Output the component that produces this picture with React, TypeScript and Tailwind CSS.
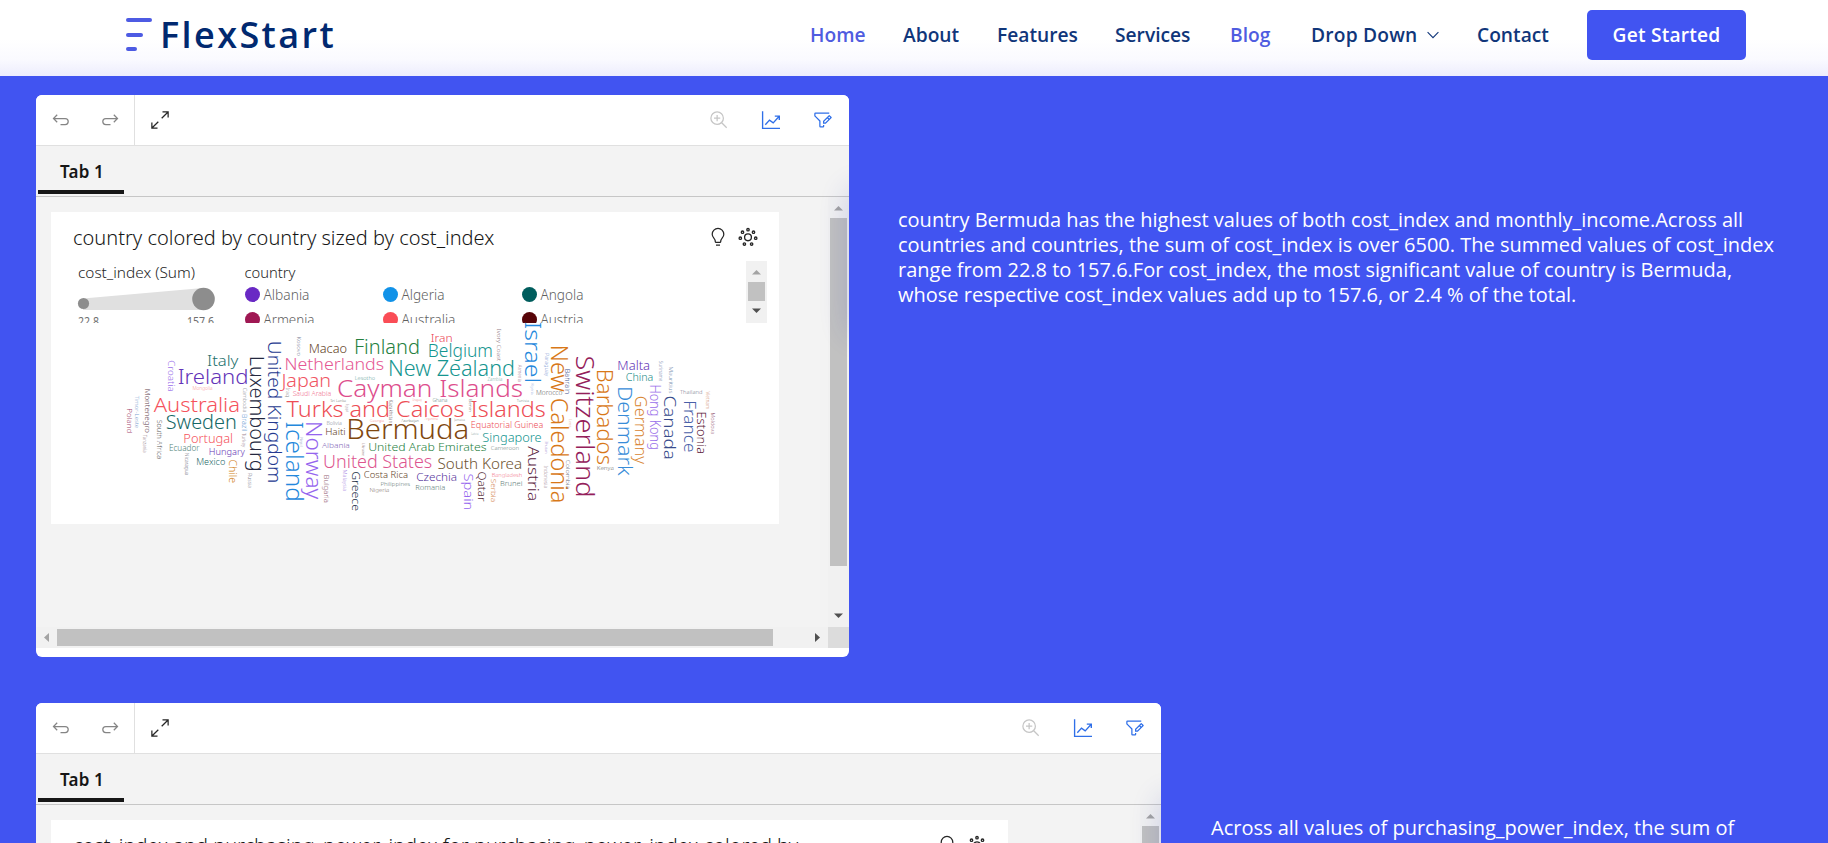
import React from "react";

const UI = "font-['Noto_Sans',sans-serif]";

type Word = [string, number, number, number, number, string];

// text, x, baseline, length, size, colour
const across: Word[] = [
  ["Italy", 207.7, 366, 30.3, 14, "#22706c"],
  ["Ireland", 178.7, 384, 69.3, 20.5, "#6333b8"],
  ["Mongolia", 192.7, 390, 19.7, 5, "#fa9a9a"],
  ["Australia", 154.7, 411.7, 84.7, 21, "#f5525c"],
  ["Sweden", 166.7, 428.5, 69.5, 20, "#156866"],
  ["Portugal", 184, 442.7, 48.7, 13, "#f5525c"],
  ["Ecuador", 169.3, 451, 30, 8.5, "#4f7f78"],
  ["Hungary", 209.3, 454.7, 35.3, 10, "#6333b5"],
  ["Mexico", 196.7, 465, 28.3, 9.5, "#206866"],
  ["Macao", 309.3, 353, 37.3, 13.5, "#64431f"],
  ["Finland", 355, 354, 64.3, 20.5, "#258040"],
  ["Iran", 431.3, 342, 21, 11, "#ea4050"],
  ["Belgium", 428.7, 357.3, 63.7, 18, "#159590"],
  ["Netherlands", 285.3, 370, 98.3, 17.5, "#e55893"],
  ["New Zealand", 389, 375.7, 125.3, 21.5, "#159590"],
  ["Japan", 282.3, 387, 48.3, 18.5, "#f05562"],
  ["Lesotho", 355, 380, 20, 5, "#6fa9a4"],
  ["Saudi Arabia", 293, 395.7, 38, 7, "#f07090"],
  ["Cayman Islands", 338.3, 396.7, 184, 25, "#dd4d8d"],
  ["Turks and Caicos Islands", 287.7, 416.7, 257.3, 23, "#ed4d55"],
  ["Bermuda", 347.7, 439.3, 120.7, 28.5, "#804810"],
  ["Haiti", 325.7, 435.3, 19.7, 10, "#64431f"],
  ["Bolivia", 326.7, 425, 15, 4.5, "#8a9098"],
  ["Albania", 322.3, 447.7, 27.3, 8, "#8569b8"],
  ["United Arab Emirates", 368.7, 451.3, 117.6, 10.8, "#258040"],
  ["United States", 324, 468, 107.7, 18, "#dd558f"],
  ["South Korea", 438.3, 469, 83.4, 15, "#6d5230"],
  ["Costa Rica", 364.3, 477.7, 43.4, 8.7, "#64431f"],
  ["Czechia", 416.7, 481, 40, 11, "#53309a"],
  ["Philippines", 380.7, 485.7, 29.3, 5.5, "#6d7f7d"],
  ["Nigeria", 369.7, 491.7, 19.3, 5.5, "#7f7368"],
  ["Romania", 415.7, 490, 29.3, 7.5, "#64807a"],
  ["Sri Lanka", 330.7, 401.7, 15.3, 3.5, "#777777"],
  ["Ghana", 432.7, 401.7, 14.6, 5, "#6f908a"],
  ["Georgia", 370, 421.7, 14, 3.5, "#f28a8a"],
  ["Azerbaijan", 401.3, 421.7, 17.7, 3.5, "#5a6f6a"],
  ["Argentina", 425, 419.7, 12.7, 3, "#f28a8a"],
  ["Uruguay", 412.7, 401, 9, 3, "#f28a8a"],
  ["Jamaica", 454.3, 421, 10.7, 3, "#888888"],
  ["Zambia", 487.7, 380.7, 14.6, 4.5, "#7fb0aa"],
  ["Morocco", 536.3, 394.7, 26, 7, "#6d6d6d"],
  ["Tunisia", 517, 401.7, 12, 4, "#6f908a"],
  ["Equatorial Guinea", 471.3, 427.7, 71.7, 9, "#ed4d55"],
  ["Singapore", 483, 442, 58.3, 13, "#159590"],
  ["Latvia", 471.3, 435, 7, 3, "#7fa09a"],
  ["Cameroon", 491, 449.7, 28, 6, "#7a8a88"],
  ["Bangladesh", 492, 477, 30, 5.5, "#f27a90"],
  ["Brunei", 500.3, 485.7, 22, 8, "#64807a"],
  ["Malta", 618, 370, 31.7, 13, "#6333b5"],
  ["China", 626.3, 381, 26.7, 10.5, "#158a85"],
  ["Kenya", 597, 470.3, 16.7, 5.5, "#6d6d6d"],
  ["Thailand", 680.3, 394, 22, 6, "#7f7f95"],
];

// text, baseline x, top y, length, size, colour
const down: Word[] = [
  ["Croatia", 168, 360.7, 30.7, 9.5, "#9a70ea"],
  ["Montenegro", 144.7, 389, 43.7, 7.5, "#64434f"],
  ["Timor-Leste", 135, 396, 32, 5.5, "#7aa0d0"],
  ["Poland", 126.5, 408.7, 24.3, 7.5, "#a0406a"],
  ["Tanzania", 142.7, 435, 17.7, 4.5, "#907a85"],
  ["South Africa", 157, 420, 39, 6.5, "#555555"],
  ["Nicaragua", 185, 453.3, 21.7, 5, "#6a6a7a"],
  ["Chile", 229.3, 460, 22.7, 10.5, "#d08020"],
  ["Russia", 248.3, 473.3, 14.7, 5, "#7a7a8a"],
  ["Cambodia", 243, 388, 24.3, 5, "#7f8890"],
  ["Brazil", 242, 414.3, 17, 7, "#5a94d0"],
  ["Turkey", 242.3, 433.3, 13.7, 5, "#988090"],
  ["Luxembourg", 250.3, 356.7, 114.3, 21, "#24283f"],
  ["United Kingdom", 268, 341.7, 141, 19.5, "#253a90"],
  ["Iceland", 285.7, 422.7, 78.3, 24, "#2488dc"],
  ["Norway", 306, 422, 76.5, 22.5, "#9565ee"],
  ["Nepal", 300, 437.7, 9, 3.5, "#8a9ac0"],
  ["Iraq", 285.5, 388, 9, 5, "#888888"],
  ["Kosovo", 297.3, 336.7, 19.3, 5, "#7a8098"],
  ["Egypt", 346, 404, 8, 3.5, "#a08a95"],
  ["Kazakhstan", 389.3, 400, 23, 5, "#6a5a60"],
  ["Ukraine", 362.3, 443.3, 12.7, 4, "#8a6a6a"],
  ["Malaysia", 343.3, 470, 21, 5, "#a07ce0"],
  ["Bulgaria", 323.7, 475, 27.7, 6.5, "#905a70"],
  ["Greece", 352, 471.7, 39, 11.5, "#24324a"],
  ["Spain", 464.3, 474, 36, 12, "#9565ee"],
  ["Qatar", 478, 472, 29.3, 11, "#4f2530"],
  ["Ivory Coast", 497.3, 329, 32, 5, "#907a85"],
  ["Israel", 524.7, 322.7, 60, 23, "#2488dc"],
  ["Paraguay", 544.7, 353.3, 23, 5, "#7090d0"],
  ["Armenia", 518, 365, 16.7, 4.5, "#a07088"],
  ["Algeria", 531, 383.3, 11, 4, "#8aa8e0"],
  ["Bahrain", 565, 369, 25, 7.5, "#3a4d88"],
  ["New Caledonia", 550.7, 346, 156.7, 24, "#d87818"],
  ["Switzerland", 575.7, 356.7, 140, 25.5, "#94205a"],
  ["Benin", 469.3, 399.3, 12.4, 4, "#444444"],
  ["Serbia", 490.7, 479, 23, 7.5, "#d48550"],
  ["Austria", 528, 447, 53.7, 15, "#5a2440"],
  ["Laos", 569, 419, 8.3, 4, "#e0a080"],
  ["Bhutan", 544.7, 441, 12.3, 4, "#a08ad0"],
  ["Colombia", 565.7, 460, 29, 5.5, "#6a7080"],
  ["Indonesia", 544.3, 465.7, 22.3, 4.5, "#a08a95"],
  ["Barbados", 597, 370, 94.3, 23, "#d87818"],
  ["Denmark", 617.7, 387, 88, 21, "#388cd8"],
  ["Germany", 635.3, 396.7, 66.6, 17, "#d88430"],
  ["Hong Kong", 650, 385.3, 64, 14.5, "#9a70ea"],
  ["Suriname", 659.3, 361, 20.3, 5, "#7a8ab0"],
  ["Mauritius", 669.3, 366.7, 26.6, 5.5, "#7a90b0"],
  ["Canada", 664.3, 396.3, 63, 17.5, "#384c8c"],
  ["France", 683.7, 401, 51, 16, "#4860a8"],
  ["Estonia", 697, 412, 41.7, 12.5, "#5a2038"],
  ["Vietnam", 706, 391.7, 17.3, 4.5, "#d09070"],
  ["Moldova", 711, 412.7, 21.3, 5, "#986078"],
];

// Pull each word back by its side bearing so the ink starts on the given point.
function WordCloud() {
  return (
    <svg width="728" height="200" viewBox="51 323 728 200" className={`${UI} block overflow-visible font-light`}>
      {across.map(([t, x, y, len, size, fill]) => (
        <text key={t} x={x - size * 0.05} y={y} textLength={len + size * 0.08} lengthAdjust="spacingAndGlyphs" fontSize={size * 0.98} fill={fill}>
          {t}
        </text>
      ))}
      {down.map(([t, x, y, len, size, fill]) => (
        <text key={t} transform={`translate(${x} ${y - size * 0.05}) rotate(90)`} textLength={len + size * 0.08} lengthAdjust="spacingAndGlyphs" fontSize={size * 0.98} fill={fill}>
          {t}
        </text>
      ))}
    </svg>
  );
}

const legend: [string, string, number, number, number][] = [
  ["Albania", "#6929c4", 252.5, 294.5, 45],
  ["Algeria", "#1192e8", 390.5, 294.5, 42],
  ["Angola", "#005d5d", 529.5, 294.5, 42],
  ["Armenia", "#9f1853", 252.5, 319.5, 50],
  ["Australia", "#fa4d56", 390.5, 319.5, 53],
  ["Austria", "#570408", 529.5, 319.5, 42],
];

function Legend() {
  return (
    <svg width="695" height="62" viewBox="51 261 695 62" className={`${UI} block overflow-hidden`}>
      <text x="78" y="278" fontSize="14.5" textLength="117" lengthAdjust="spacingAndGlyphs" fill="#262626" className="font-light">cost_index (Sum)</text>
      <text x="244.500" y="278" fontSize="14.5" textLength="51" lengthAdjust="spacingAndGlyphs" fill="#262626" className="font-light">country</text>
      <path d="M83 298.500 203 288v22H83z" fill="#e0e0e0" />
      <circle cx="83.500" cy="303.500" r="5.600" fill="#8d8d8d" />
      <circle cx="203.500" cy="299" r="11.300" fill="#8d8d8d" />
      <text x="78" y="325.500" fontSize="12.5" textLength="21" lengthAdjust="spacingAndGlyphs" fill="#6f6f6f">22.8</text>
      <text x="187" y="325.500" fontSize="12.5" textLength="27" lengthAdjust="spacingAndGlyphs" fill="#6f6f6f">157.6</text>
      {legend.map(([t, c, x, y, len]) => (
        <g key={t}>
          <circle cx={x} cy={y} r="7.500" fill={c} />
          <text x={x + 11} y={y + 5.5} fontSize="14.5" textLength={len + 1} lengthAdjust="spacingAndGlyphs" fill="#5f5f5f" className="font-light">{t}</text>
        </g>
      ))}
    </svg>
  );
}

function Arrow({ dir, dark }: { dir: "up" | "down" | "left" | "right"; dark?: boolean }) {
  const d = { up: "M6 13.500h9L10.500 9z", down: "M6 7.500h9l-4.500 4.500z", left: "M13 6v9l-5-4.500z", right: "M8 6v9l5-4.500z" }[dir];
  return (
    <svg width="21" height="21" viewBox="0 0 21 21" className="block shrink-0">
      <path d={d} fill={dark ? "#505050" : "#a3a3a3"} />
    </svg>
  );
}

function Toolbar() {
  return (
    <div className="flex h-[51px] shrink-0 border-b border-[#e0e0e0] bg-white">
      <div className="flex w-[99px] items-center border-r border-[#e0e0e0] pl-[16px]">
        <svg width="18" height="18" viewBox="0 0 18 18" fill="none" stroke="#858585" strokeWidth="1.250">
          <path d="M1.700 7.500H13.200a3 3 0 0 1 0 6H8.500M5.200 3.800 1.500 7.500l3.700 3.700" />
        </svg>
        <svg width="18" height="18" viewBox="0 0 18 18" fill="none" stroke="#858585" strokeWidth="1.250" className="ml-[31px]">
          <path d="M16.300 7.500H4.800a3 3 0 0 0 0 6H9.500M12.800 3.800 16.500 7.500l-3.700 3.700" />
        </svg>
      </div>
      <div className="flex flex-1 items-center justify-between pl-[15px] pr-[16px]">
        <svg width="20" height="20" viewBox="0 0 32 32" fill="#262626">
          <path d="M20 2v2h6.586L18 12.582 19.414 14 28 5.414V12h2V2H20zM14 19.416L12.592 18 4 26.586V20H2v10h10v-2H5.414L14 19.416z" />
        </svg>
        <div className="flex items-center gap-[32px]">
          <svg width="20" height="20" viewBox="0 0 32 32" fill="#c6c6c6">
            <path d="M18 12h-4V8h-2v4H8v2h4v4h2v-4h4v-2z" />
            <path d="M21.448 20A10.856 10.856 0 0 0 24 13a11 11 0 1 0-11 11 10.856 10.856 0 0 0 7-2.552L27.586 29 29 27.586zM13 22a9 9 0 1 1 9-9 9.010 9.010 0 0 1-9 9z" />
          </svg>
          <svg width="20" height="20" viewBox="0 0 20 20" fill="none" stroke="#2f6fe8" strokeWidth="1.350">
            <path d="M1.600 1.200v17.200H19M4.300 14.800l4.200-4.700 3.700 2.800 6-6.700M13.800 6.100h4.500v4" />
          </svg>
          <svg width="20" height="20" viewBox="0 0 32 32" fill="#2f6fe8">
            <path d="M26,6H4V9.171l7.414,7.414L12,17.171V26h4V24h2v2a2,2,0,0,1-2,2H12a2,2,0,0,1-2-2V18L2.586,10.585A2,2,0,0,1,2,9.171V6A2,2,0,0,1,4,4H26Z" />
            <path d="M29.710,11.290l-3-3a1,1,0,0,0-1.420,0L16,17.590V22h4.410l9.300-9.290A1,1,0,0,0,29.710,11.290ZM19.590,20H18V18.410l5-5L24.590,15ZM26,13.590,24.410,12,26,10.410,27.590,12Z" />
          </svg>
        </div>
      </div>
    </div>
  );
}

function TabBar() {
  return (
    <div className="flex h-[51px] shrink-0 border-b border-[#c6c6c6] bg-[#f3f3f3] pl-[2px]">
      <div className="flex h-[48px] w-[86px] items-center border-b-4 border-[#161616] pl-[22px] pt-[6px]">
        <span className={`${UI} whitespace-nowrap text-[17px] font-semibold leading-none tracking-[0.2px] text-[#161616]`}>Tab 1</span>
      </div>
    </div>
  );
}

function CardHead({ title }: { title: string }) {
  return (
    <div className="flex h-[49px] shrink-0 items-start justify-between pl-[22px] pr-[21px] pt-[12px]">
      <h2 className={`${UI} whitespace-nowrap text-[20px] font-light leading-[27px] text-[#161616]`}>{title}</h2>
      <div className="flex items-center gap-[10px] pt-[3px]">
        <svg width="20" height="20" viewBox="0 0 20 20" fill="none" stroke="#262626" strokeWidth="1.250">
          <path d="M7.200 15.300h5.600M8 18.200h4M7.400 15.300c0-2.600-.6-3.300-1.700-4.500A5.700 5.700 0 0 1 4.200 7.200a5.800 5.800 0 0 1 11.600 0c0 1.400-.5 2.500-1.500 3.600-1.100 1.200-1.700 1.900-1.700 4.500" />
        </svg>
        <svg width="20" height="20" viewBox="0 0 20 20" fill="none" stroke="#262626" strokeWidth="1.350">
          <circle cx="10" cy="10.300" r="3.400" />
          <circle cx="10" cy="2.700" r="1.200" />
          <circle cx="4.500" cy="5.200" r="1.200" />
          <circle cx="15.500" cy="5.200" r="1.200" />
          <circle cx="2.300" cy="11.200" r="1.200" />
          <circle cx="17.700" cy="11.200" r="1.200" />
          <circle cx="6.400" cy="17" r="1.200" />
          <circle cx="13.600" cy="17" r="1.200" />
        </svg>
      </div>
    </div>
  );
}

function VerticalBar() {
  return (
    <div className="flex w-[21px] shrink-0 flex-col items-center bg-[#f1f1f1]">
      <Arrow dir="up" />
      <div className="h-[348px] w-[17px] bg-[#c1c1c1]" />
      <div className="flex-1" />
      <Arrow dir="down" dark />
    </div>
  );
}

function Haze() {
  return <div className="absolute left-full top-[95px] h-[142px] w-[60px] shadow-[0_0_30px_rgba(35,50,170,0.200)]" />;
}

function NavItem({ label, cls }: { label: string; cls: string }) {
  return <a className={`${cls} whitespace-nowrap`}>{label}</a>;
}

export default function App() {
  return (
    <div className="flex h-[843px] w-[1828px] flex-col overflow-hidden bg-[#4154f1]">
      <header className="flex h-[76px] shrink-0 bg-[linear-gradient(to_bottom,#fff_0,#fff_52%,#fafaff_78%,#ededfd_100%)] pl-[126px] font-['Open_Sans',sans-serif]">
        <div className="flex w-[684px] pt-[18px]">
          <div className="flex w-[34px] flex-col">
            <i className="h-[4px] w-[26px] rounded-full bg-[#4d5be3]" />
            <i className="mt-[11px] h-[4px] w-[17px] rounded-full bg-[#4d5be3]" />
            <i className="mt-[10px] h-[4px] w-[11px] rounded-full bg-[#4d5be3]" />
          </div>
          <span className="-mt-px text-[36px] font-semibold leading-[36px] tracking-[2.400px] text-[#012970]">FlexStart</span>
        </div>
        <nav className="flex h-[70px] items-center text-[19.200px] font-semibold text-[#10367a]">
          <NavItem label="Home" cls="w-[93px] text-[#4f5ce0]" />
          <NavItem label="About" cls="w-[94px]" />
          <NavItem label="Features" cls="w-[118px]" />
          <NavItem label="Services" cls="w-[115px]" />
          <NavItem label="Blog" cls="w-[81px] text-[#4f5ce0]" />
          <NavItem label="Drop Down" cls="w-[116px] tracking-[0.200px]" />
          <svg width="12" height="8" viewBox="0 0 12 8" fill="none" stroke="#10367a" strokeWidth="1.100">
            <path d="M.6 1.200 6 6.600l5.400-5.400" />
          </svg>
          <NavItem label="Contact" cls="ml-[38px] w-[110px]" />
          <a className="flex h-[50px] w-[159px] items-center justify-center whitespace-nowrap rounded-[5px] bg-[#4154f1] tracking-[0.200px] text-white">Get Started</a>
        </nav>
      </header>

      <main className="flex flex-col gap-[46px] pl-[36px] pt-[19px]">
        <section className="flex">
          <div className="relative h-[562px] w-[813px] shrink-0 overflow-hidden rounded-[6px]">
            <div className="flex h-full flex-col bg-white">
              <Toolbar />
              <TabBar />
              <div className="flex h-[430px]">
                <div className="flex-1 bg-[#f3f3f3] pl-[15px] pt-[15px]">
                  <div className="h-[312px] w-[728px] bg-white">
                    <CardHead title="country colored by country sized by cost_index" />
                    <div className="flex h-[62px]">
                      <Legend />
                      <div className="flex w-[21px] flex-col items-center bg-[#f1f1f1]">
                        <Arrow dir="up" />
                        <div className="h-[19px] w-[17px] shrink-0 bg-[#c1c1c1]" />
                        <Arrow dir="down" dark />
                      </div>
                    </div>
                    <WordCloud />
                  </div>
                </div>
                <VerticalBar />
              </div>
              <div className="flex h-[21px] items-center bg-[#f1f1f1]">
                <Arrow dir="left" />
                <div className="h-[17px] w-[716px] bg-[#c1c1c1]" />
                <div className="flex-1" />
                <Arrow dir="right" dark />
                <div className="h-full w-[21px] bg-[#dcdcdc]" />
              </div>
            </div>
            <Haze />
          </div>
          <p className="ml-[49px] mt-[112px] whitespace-nowrap font-['Open_Sans',sans-serif] text-[20px] leading-[25px] text-white">
            country Bermuda has the highest values of both cost_index and monthly_income.Across all
            <br />
            countries and countries, the sum of cost_index is over 6500. The summed values of cost_index
            <br />
            range from 22.8 to 157.6.For cost_index, the most significant value of country is Bermuda,
            <br />
            whose respective cost_index values add up to 157.6, or 2.4 % of the total.
          </p>
        </section>

        <section className="flex">
          <div className="relative h-[562px] w-[1125px] shrink-0 overflow-hidden rounded-[6px]">
            <div className="flex h-full flex-col bg-white">
              <Toolbar />
              <TabBar />
              <div className="flex h-[430px]">
                <div className="flex-1 bg-[#f3f3f3] pl-[15px] pt-[15px]">
                  <div className="h-[312px] w-[957px] bg-white">
                    <CardHead title="cost_index and purchasing_power_index for purchasing_power_index colored by" />
                  </div>
                </div>
                <VerticalBar />
              </div>
            </div>
            <Haze />
          </div>
          <p className="ml-[50px] mt-[112px] whitespace-nowrap font-['Open_Sans',sans-serif] text-[20px] leading-[25px] text-white">
            Across all values of purchasing_power_index, the sum of
          </p>
        </section>
      </main>
    </div>
  );
}
